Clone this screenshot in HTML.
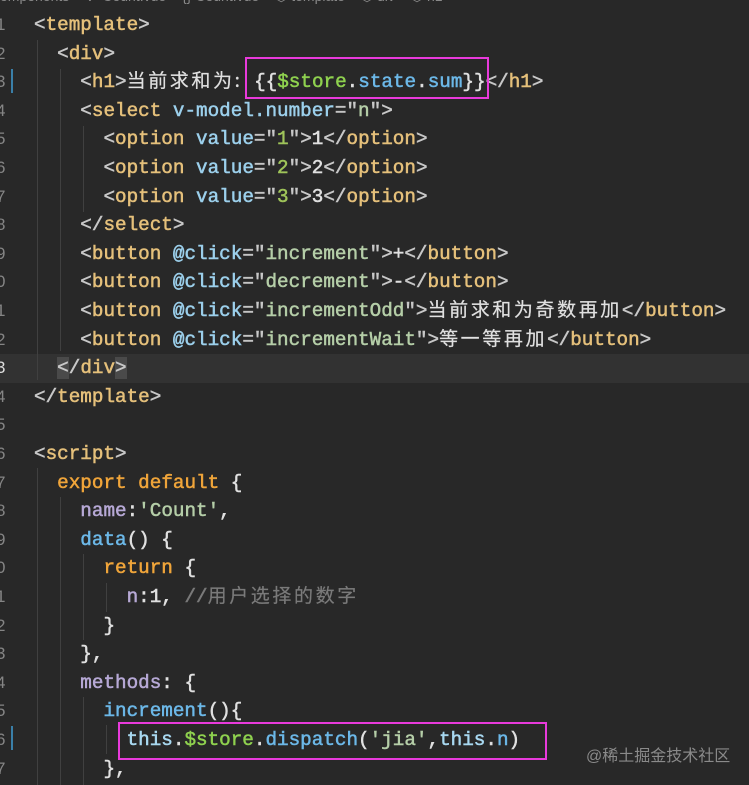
<!DOCTYPE html>
<html><head><meta charset="utf-8"><style>
body{margin:0;width:749px;height:785px;background:#282828;overflow:hidden;position:relative;font-family:"Liberation Mono","Noto Sans CJK SC",monospace;}
.crumb{position:absolute;left:0;top:-12px;font:14px "Liberation Sans",sans-serif;color:#8a8a8a;white-space:pre}
.l{position:absolute;left:34px;font-size:19.3px;line-height:28.6px;height:28.6px;white-space:pre;color:#d4d4d4;-webkit-text-stroke:0.5px currentColor}
.n{position:absolute;left:-4px;font-size:17px;line-height:28.6px;color:#858585;font-family:"Liberation Sans",sans-serif}
.cur{background:#323232;position:absolute;left:0;width:749px;height:28.6px}
.g{position:absolute;width:1px;background:#404040}
.p{color:#c8c8c8}.t{color:#e5c07b}.a{color:#9cd0ec}.s{color:#b5cea8}.v{color:#9fc45a}
.k{color:#f0a53a}.pr{color:#b7a9d6}.f{color:#6cb8e8}.d{color:#8fd14f}.th{color:#a8d8f0}.c{color:#7a7a7a}.w{color:#e0e0e0}
.cj{font-family:"Noto Sans CJK SC",sans-serif;font-size:19px;letter-spacing:2.6px;line-height:20px;-webkit-text-stroke:0.2px currentColor}
.box{position:absolute;border:2px solid #e83adb}
.wm{position:absolute;left:586px;top:742px;font:16px "Liberation Sans","Noto Sans CJK SC",sans-serif;color:#8a8a8a}
</style></head><body>
<div class="crumb">omponents &gt; V  Count.vue &gt; {} Count.vue &gt; ⬡ template &gt; ⬡ div &gt; ⬡ h1</div>
<div class="cur" style="top:354px"></div>
<div class="g" style="left:37px;top:40px;height:340px"></div>
<div class="g" style="left:60px;top:69px;height:282px"></div>
<div class="g" style="left:83px;top:126px;height:86px"></div>
<div class="g" style="left:37px;top:468px;height:317px"></div>
<div class="g" style="left:60px;top:497px;height:288px"></div>
<div class="g" style="left:83px;top:554px;height:86px"></div>
<div class="g" style="left:106px;top:583px;height:29px"></div>
<div class="g" style="left:83px;top:697px;height:88px"></div>
<div class="g" style="left:106px;top:725px;height:29px"></div>
<div class="g" style="left:11px;top:69px;height:24px;background:#3a7fa8;width:2px"></div>
<div class="g" style="left:11px;top:726px;height:24px;background:#3a7fa8;width:2px"></div>

<div class="n" style="top:11px">1</div><div class="l" style="top:11px"><span class="p">&lt;</span><span class="t">template</span><span class="p">&gt;</span></div>
<div class="n" style="top:39.6px">2</div><div class="l" style="top:39.6px">  <span class="p">&lt;</span><span class="t">div</span><span class="p">&gt;</span></div>
<div class="n" style="top:68.2px">3</div><div class="l" style="top:68.2px">    <span class="p">&lt;</span><span class="t">h1</span><span class="p">&gt;</span><span class="w cj">当前求和为:</span> <span class="w">{{</span><span class="d">$store</span><span class="w">.</span><span class="f">state</span><span class="w">.</span><span class="f">sum</span><span class="w">}}</span><span class="p">&lt;/</span><span class="t">h1</span><span class="p">&gt;</span></div>
<div class="n" style="top:96.8px">4</div><div class="l" style="top:96.8px">    <span class="p">&lt;</span><span class="t">select</span> <span class="a">v-model.number</span><span class="p">="</span><span class="s">n</span><span class="p">"&gt;</span></div>
<div class="n" style="top:125.4px">5</div><div class="l" style="top:125.4px">      <span class="p">&lt;</span><span class="t">option</span> <span class="a">value</span><span class="p">="</span><span class="v">1</span><span class="p">"&gt;</span><span class="w">1</span><span class="p">&lt;/</span><span class="t">option</span><span class="p">&gt;</span></div>
<div class="n" style="top:154px">6</div><div class="l" style="top:154px">      <span class="p">&lt;</span><span class="t">option</span> <span class="a">value</span><span class="p">="</span><span class="v">2</span><span class="p">"&gt;</span><span class="w">2</span><span class="p">&lt;/</span><span class="t">option</span><span class="p">&gt;</span></div>
<div class="n" style="top:182.6px">7</div><div class="l" style="top:182.6px">      <span class="p">&lt;</span><span class="t">option</span> <span class="a">value</span><span class="p">="</span><span class="v">3</span><span class="p">"&gt;</span><span class="w">3</span><span class="p">&lt;/</span><span class="t">option</span><span class="p">&gt;</span></div>
<div class="n" style="top:211.2px">8</div><div class="l" style="top:211.2px">    <span class="p">&lt;/</span><span class="t">select</span><span class="p">&gt;</span></div>
<div class="n" style="top:239.8px">9</div><div class="l" style="top:239.8px">    <span class="p">&lt;</span><span class="t">button</span> <span class="a">@click</span><span class="p">="</span><span class="s">increment</span><span class="p">"&gt;</span><span class="w">+</span><span class="p">&lt;/</span><span class="t">button</span><span class="p">&gt;</span></div>
<div class="n" style="top:268.4px">0</div><div class="l" style="top:268.4px">    <span class="p">&lt;</span><span class="t">button</span> <span class="a">@click</span><span class="p">="</span><span class="s">decrement</span><span class="p">"&gt;</span><span class="w">-</span><span class="p">&lt;/</span><span class="t">button</span><span class="p">&gt;</span></div>
<div class="n" style="top:297px">1</div><div class="l" style="top:297px">    <span class="p">&lt;</span><span class="t">button</span> <span class="a">@click</span><span class="p">="</span><span class="s">incrementOdd</span><span class="p">"&gt;</span><span class="w cj">当前求和为奇数再加</span><span class="p">&lt;/</span><span class="t">button</span><span class="p">&gt;</span></div>
<div class="n" style="top:325.6px">2</div><div class="l" style="top:325.6px">    <span class="p">&lt;</span><span class="t">button</span> <span class="a">@click</span><span class="p">="</span><span class="s">incrementWait</span><span class="p">"&gt;</span><span class="w cj">等一等再加</span><span class="p">&lt;/</span><span class="t">button</span><span class="p">&gt;</span></div>
<div class="n" style="top:354.2px;color:#ddd">3</div><div class="l" style="top:354.2px">  <span class="p" style="background:#4a4a4a">&lt;</span><span class="p">/</span><span class="t">div</span><span class="p" style="background:#4a4a4a">&gt;</span></div>
<div class="n" style="top:382.8px">4</div><div class="l" style="top:382.8px"><span class="p">&lt;/</span><span class="t">template</span><span class="p">&gt;</span></div>
<div class="n" style="top:411.4px">5</div>
<div class="n" style="top:440px">6</div><div class="l" style="top:440px"><span class="p">&lt;</span><span class="t">script</span><span class="p">&gt;</span></div>
<div class="n" style="top:468.6px">7</div><div class="l" style="top:468.6px">  <span class="k">export</span> <span class="k">default</span> <span class="w">{</span></div>
<div class="n" style="top:497.2px">8</div><div class="l" style="top:497.2px">    <span class="pr">name</span><span class="w">:</span><span class="s">'Count'</span><span class="w">,</span></div>
<div class="n" style="top:525.8px">9</div><div class="l" style="top:525.8px">    <span class="f">data</span><span class="w">() {</span></div>
<div class="n" style="top:554.4px">0</div><div class="l" style="top:554.4px">      <span class="k">return</span> <span class="w">{</span></div>
<div class="n" style="top:583px">1</div><div class="l" style="top:583px">        <span class="pr">n</span><span class="w">:1,</span> <span class="c">//<span class="cj">用户选择的数字</span></span></div>
<div class="n" style="top:611.6px">2</div><div class="l" style="top:611.6px">      <span class="w">}</span></div>
<div class="n" style="top:640.2px">3</div><div class="l" style="top:640.2px">    <span class="w">},</span></div>
<div class="n" style="top:668.8px">4</div><div class="l" style="top:668.8px">    <span class="pr">methods</span><span class="w">: {</span></div>
<div class="n" style="top:697.4px">5</div><div class="l" style="top:697.4px">      <span class="f">increment</span><span class="w">(){</span></div>
<div class="n" style="top:726px">6</div><div class="l" style="top:726px">        <span class="th">this</span><span class="w">.</span><span class="d">$store</span><span class="w">.</span><span class="f">dispatch</span><span class="w">(</span><span class="s">'jia'</span><span class="w">,</span><span class="th">this</span><span class="w">.</span><span class="f">n</span><span class="w">)</span></div>
<div class="n" style="top:754.6px">7</div><div class="l" style="top:754.6px">      <span class="w">},</span></div>

<div class="box" style="left:245px;top:57px;width:240px;height:38px"></div>
<div class="box" style="left:118px;top:722px;width:425px;height:34px"></div>
<div class="wm">@稀土掘金技术社区</div>
</body></html>
